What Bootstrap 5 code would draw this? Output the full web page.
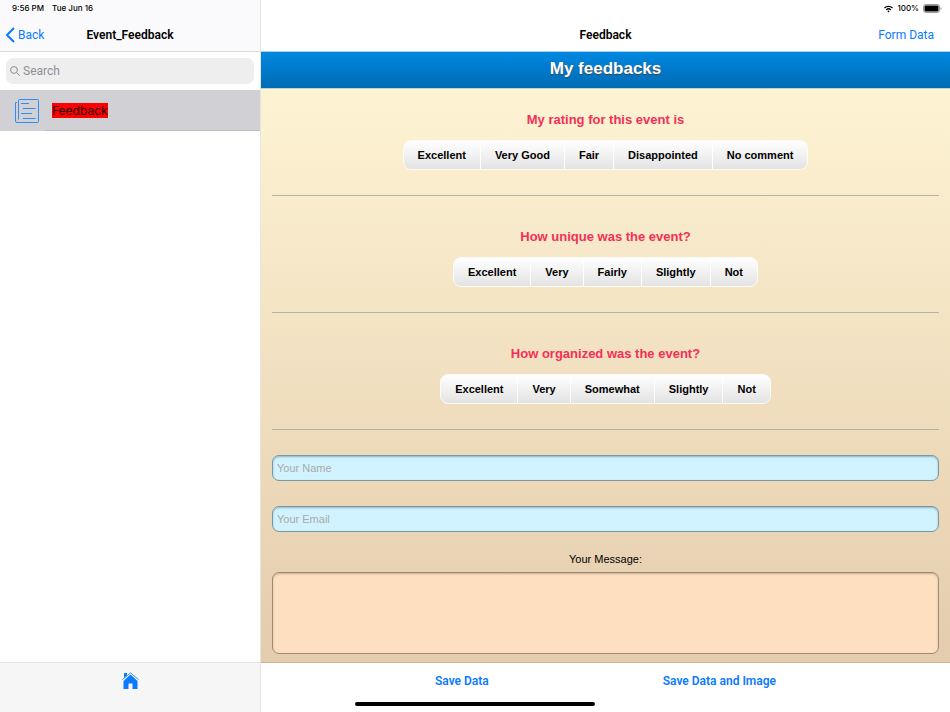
<!DOCTYPE html>
<html lang="en">
<head>
<meta charset="utf-8">
<meta name="viewport" content="width=device-width, initial-scale=1">
<title>Feedback</title>
<link href="https://cdn.jsdelivr.net/npm/bootstrap@5.3.0/dist/css/bootstrap.min.css" rel="stylesheet">
<style>
  :root { --ios-blue: #0a7aff; }
  body { font-family: Roboto, "Liberation Sans", sans-serif; font-size: 12px; line-height: 16px; color: #000; background: #fff; }
  svg { display: block; }
  a, .tool-btn { color: var(--ios-blue); text-decoration: none; }

  .side-pane { width: 261px; border-right: 1px solid #e4e4e6; background: #fff; }
  .side-head { height: 52px; background: #fafafc; border-bottom: 1px solid #dcdcdf; }
  .status-line { height: 17px; font-family: Inter, sans-serif; font-size: 8px; font-weight: 500; line-height: 17px; }
  .head-line { height: 35px; }
  .head-line h1, .head-line h2 { font-size: 12px; line-height: 16px; font-weight: 600; margin: 0; }
  .three-cols { display: grid; grid-template-columns: 1fr auto 1fr; align-items: center; }

  .search-wrap { padding: 6px; }
  .search-box { height: 26px; border-radius: 7px; background: #eeeeef; color: #8e8e93; padding: 0 4px; gap: 3px; }
  .search-box input { border: 0; background: none; font-size: 12px; line-height: 16px; padding: 0; outline: 0; color: #000; }
  .search-box input::placeholder { color: #8e8e93; opacity: 1; }

  .form-row-link { height: 41px; background: #d1d0d5; color: #000; padding-left: 15px; gap: 6px; }
  .form-row-link .row-text { border-bottom: 1px solid #bdbcc1; padding-left: 7px; }
  .flagged { background: #f00; font-family: Inter, sans-serif; font-size: 12px; line-height: 15px; color: #200; }
  .side-foot { height: 50px; background: #f6f6f7; border-top: 1px solid #e3e3e5; padding-top: 9px; }

  .main-head { height: 52px; border-bottom: 1px solid #a9cfe6; }
  .form-area { font-family: "Liberation Sans", Arial, sans-serif; font-size: 11px; background: linear-gradient(#fff6d5, #e4ccae); border-bottom: 1px solid #d3b491; }
  .form-title { height: 37px; margin: 0; padding-bottom: 2px; font-size: 17px; font-weight: 700; color: #fff; text-shadow: 0 1px 1px #444; background: linear-gradient(#0088e0, #006bb4); border-bottom: 1px solid #b9d4d8; }
  .form-body { padding: 0 11px 8px 11px; }
  .question { height: 117px; border-bottom: 1px solid #b4b0b0; }
  .question legend { float: none; width: auto; margin: 0 auto 12px; padding: 33px 0 0; font-size: 13px; line-height: 16px; font-weight: 700; color: #f52f57; }
  .question.first-q { height: 107px; }
  .question.first-q legend { padding-top: 23px; }
  .segments { border: 1px solid #fdfbf6; border-radius: 8px; overflow: hidden; background: linear-gradient(#fff, #e3e3e3); }
  .segments .seg { height: 28px; line-height: 29px; padding: 0 14px; font-weight: 700; color: #000; cursor: pointer; }
  .segments .seg + .btn-check + .seg { border-left: 1px solid #fff; }
  .segments .btn-check:checked + .seg { background: #c9d9ea; }
  .field { border: 1px solid #7c98a0; border-radius: 7px; height: 26px; padding: 0 4px; font-size: 11px; background: #d0f3ff; box-shadow: inset 0 1px 2px #8fb4c0; margin-top: 25px; color: #000; outline-offset: 0; }
  .field::placeholder { color: #a9a9a9; opacity: 1; }
  .msg-label { margin: 19px 0 5px; line-height: 16px; }
  .field-msg { display: block; height: 82px; margin: 0; padding: 5px; background: #fee0c0; border-color: #9d8b76; box-shadow: inset 0 1px 2px #c8ab8c; resize: none; }
  .main-foot { height: 49px; padding-top: 10px; }
  .tool-btn { border: 0; background: none; padding: 0; font-weight: 600; line-height: 16px; }
  .home-bar { position: absolute; bottom: 6px; left: 50%; transform: translateX(-50%); width: 240px; height: 4px; border-radius: 2px; background: #000; }
</style>
</head>
<body>
<div class="d-flex min-vh-100 position-relative">
  <aside class="side-pane d-flex flex-column flex-shrink-0">
    <header class="side-head">
      <div class="status-line d-flex gap-2 ps-2 ms-1"><span>9:56 PM</span><span>Tue Jun 16</span></div>
      <div class="head-line three-cols px-1">
        <a href="#" class="d-flex align-items-center">
          <svg width="14" height="18" viewBox="0 0 14 18" fill="none" stroke="#0a7aff" stroke-width="2" aria-hidden="true"><path d="M10 2 3 9l7 7"/></svg>Back</a>
        <h1>Event_Feedback</h1>
      </div>
    </header>
    <div class="search-wrap">
      <div class="search-box d-flex align-items-center">
        <svg width="10" height="10" viewBox="0 0 10 10" fill="none" stroke="#8e8e93" aria-hidden="true"><circle cx="4" cy="4" r="3.4"/><path d="m6.5 6.5 3.2 3.2"/></svg>
        <input type="search" class="flex-grow-1" placeholder="Search" aria-label="Search">
      </div>
    </div>
    <nav>
      <a href="#" class="form-row-link d-flex align-items-center">
        <svg width="24" height="24" viewBox="0 0 24 24" fill="none" stroke="#2f8cf0" aria-hidden="true"><path d="M3.500 20.500V1.500q0-1 1-1h18q1 0 1 1v21q0 1-1 1H2q-1.500 0-1.500-1.500V3.500h1.500"/><path d="M6 4.500h8M8 9.500h12.500M6 14.500h11M8 19.500h12.500"/></svg>
        <span class="row-text flex-grow-1 align-self-stretch d-flex align-items-center"><span class="flagged">Feedback</span></span>
      </a>
    </nav>
    <footer class="side-foot mt-auto d-flex justify-content-center align-items-start">
      <a href="#" aria-label="Home">
        <svg width="17" height="17" viewBox="0 0 17 17" fill="#0a7aff" aria-hidden="true"><path d="M8.500 2.500 15.500 9v8H10.500v-5.500h-4V17h-5V9z"/><path d="M2 1h3v2.500L2 6z"/><path d="M.5 7.500 8.500.8l8 6.700" fill="none" stroke="#0a7aff" stroke-width=".8"/></svg>
      </a>
    </footer>
  </aside>

  <main class="flex-grow-1 d-flex flex-column">
    <header class="main-head">
      <div class="status-line d-flex justify-content-end align-items-center pe-2">
        <svg class="me-1" width="9" height="8" viewBox="0 0 9 8" fill="none" stroke="#000" stroke-width="1.300" aria-hidden="true"><path d="M.5 3a5.700 5.700 0 0 1 8 0M2.200 4.900a3.300 3.300 0 0 1 4.600 0"/><path d="M3.300 6 4.500 7.500 5.700 6a2 2 0 0 0-2.400 0z" fill="#000" stroke="none"/></svg>
        <span>100%</span>
        <svg class="ms-1" width="19" height="9" viewBox="0 0 19 9" aria-hidden="true"><rect x=".5" y=".5" width="16" height="8" rx="2.200" fill="#fff" stroke="#999"/><rect x="1.500" y="1.500" width="14" height="6" rx="1"/><path d="M17.500 3v3q1-.5 1-1.500t-1-1.500" fill="#999"/></svg>
      </div>
      <div class="head-line three-cols">
        <span></span>
        <h2>Feedback</h2>
        <a href="#" class="text-end pe-3">Form Data</a>
      </div>
    </header>

    <form class="form-area flex-grow-1 d-flex flex-column" id="feedback-form">
      <h3 class="form-title d-flex align-items-center justify-content-center">My feedbacks</h3>
      <div class="form-body flex-grow-1 d-flex flex-column text-center">
        <fieldset class="question first-q">
          <legend>My rating for this event is</legend>
          <div class="segments d-inline-flex">
            <input class="btn-check" type="radio" name="rating" id="r1"><label class="seg" for="r1">Excellent</label>
            <input class="btn-check" type="radio" name="rating" id="r2"><label class="seg" for="r2">Very Good</label>
            <input class="btn-check" type="radio" name="rating" id="r3"><label class="seg" for="r3">Fair</label>
            <input class="btn-check" type="radio" name="rating" id="r4"><label class="seg" for="r4">Disappointed</label>
            <input class="btn-check" type="radio" name="rating" id="r5"><label class="seg" for="r5">No comment</label>
          </div>
        </fieldset>
        <fieldset class="question">
          <legend>How unique was the event?</legend>
          <div class="segments d-inline-flex">
            <input class="btn-check" type="radio" name="unique" id="u1"><label class="seg" for="u1">Excellent</label>
            <input class="btn-check" type="radio" name="unique" id="u2"><label class="seg" for="u2">Very</label>
            <input class="btn-check" type="radio" name="unique" id="u3"><label class="seg" for="u3">Fairly</label>
            <input class="btn-check" type="radio" name="unique" id="u4"><label class="seg" for="u4">Slightly</label>
            <input class="btn-check" type="radio" name="unique" id="u5"><label class="seg" for="u5">Not</label>
          </div>
        </fieldset>
        <fieldset class="question">
          <legend>How organized was the event?</legend>
          <div class="segments d-inline-flex">
            <input class="btn-check" type="radio" name="organized" id="o1"><label class="seg" for="o1">Excellent</label>
            <input class="btn-check" type="radio" name="organized" id="o2"><label class="seg" for="o2">Very</label>
            <input class="btn-check" type="radio" name="organized" id="o3"><label class="seg" for="o3">Somewhat</label>
            <input class="btn-check" type="radio" name="organized" id="o4"><label class="seg" for="o4">Slightly</label>
            <input class="btn-check" type="radio" name="organized" id="o5"><label class="seg" for="o5">Not</label>
          </div>
        </fieldset>
        <input type="text" class="field w-100" placeholder="Your Name" aria-label="Your Name">
        <input type="email" class="field w-100" placeholder="Your Email" aria-label="Your Email">
        <label class="msg-label" for="message">Your Message:</label>
        <textarea id="message" class="field field-msg w-100 flex-grow-1"></textarea>
      </div>
    </form>

    <footer class="main-foot d-flex justify-content-evenly align-items-start">
      <button type="submit" form="feedback-form" class="tool-btn">Save Data</button>
      <button type="submit" form="feedback-form" class="tool-btn">Save Data and Image</button>
    </footer>
  </main>
  <div class="home-bar"></div>
</div>
<script src="https://cdn.jsdelivr.net/npm/bootstrap@5.3.0/dist/js/bootstrap.bundle.min.js"></script>
</body>
</html>
